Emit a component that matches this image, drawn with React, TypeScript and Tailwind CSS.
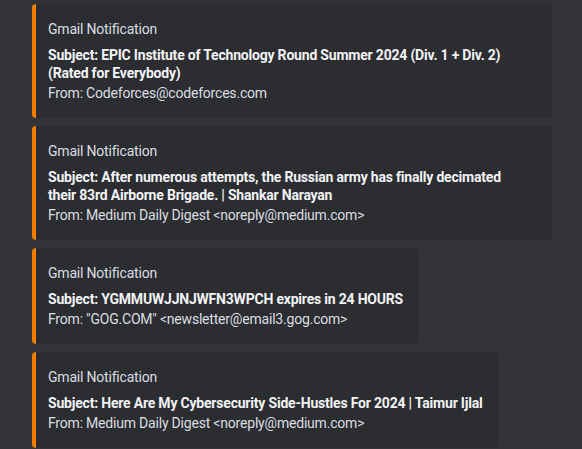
const notifications = [
  {
    id: 1,
    wide: true,
    subject: "EPIC Institute of Technology Round Summer 2024 (Div. 1 + Div. 2) (Rated for Everybody)",
    from: "Codeforces@codeforces.com",
  },
  {
    id: 2,
    wide: true,
    subject:
      "After numerous attempts, the Russian army has finally decimated their 83rd Airborne Brigade. | Shankar Narayan",
    from: "Medium Daily Digest <noreply@medium.com>",
  },
  {
    id: 3,
    wide: false,
    subject: "YGMMUWJJNJWFN3WPCH expires in 24 HOURS",
    from: '"GOG.COM" <newsletter@email3.gog.com>',
  },
  {
    id: 4,
    wide: false,
    subject: "Here Are My Cybersecurity Side-Hustles For 2024 | Taimur Ijlal",
    from: "Medium Daily Digest <noreply@medium.com>",
  },
];

const Embed = ({ subject, from, wide }: { subject: string; from: string; wide: boolean }) => (
  <div
    className={`self-start max-w-[520px] rounded border-l-4 border-[#f57c00] bg-[#2b2d31] pt-4 pr-4 pb-4 pl-3 text-[14px] leading-[18px] ${
      wide ? "w-[520px]" : ""
    }`}
  >
    <div className="text-[#dbdee1] tracking-[-0.2px]">Gmail Notification</div>
    <div className="mt-2 max-w-[470px] font-bold text-[#f2f3f5] tracking-[-0.2px]">Subject: {subject}</div>
    <div className="mt-[2px] text-[#dbdee1] tracking-[-0.2px]">From: {from}</div>
  </div>
);

export default function App() {
  return (
    <div
      className="flex h-[449px] flex-col gap-2 overflow-hidden bg-[#313338] pt-1 pl-8"
      style={{ fontFamily: "Roboto, 'Noto Sans', sans-serif" }}
    >
      {notifications.map((n) => (
        <Embed key={n.id} subject={n.subject} from={n.from} wide={n.wide} />
      ))}
    </div>
  );
}
